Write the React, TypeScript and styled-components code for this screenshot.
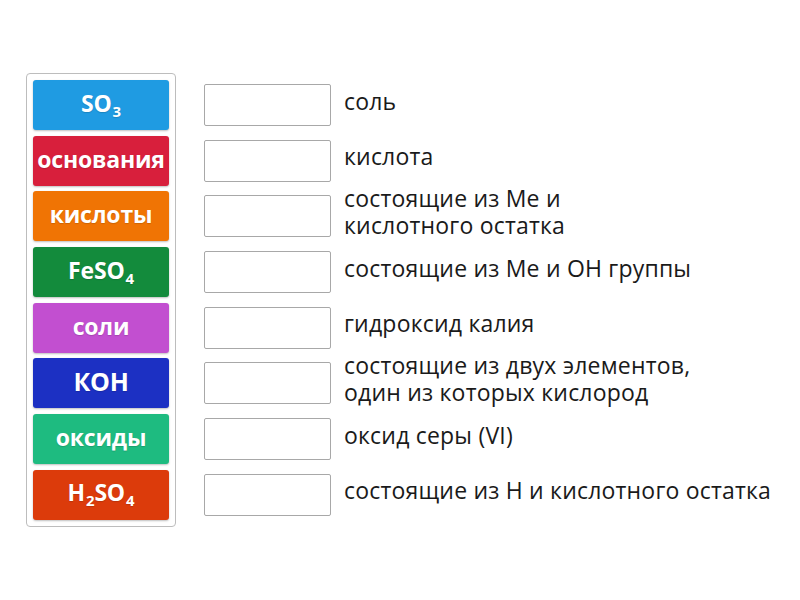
import React from "react";
import styled, { createGlobalStyle } from "styled-components";

const Global = createGlobalStyle`
  html, body { margin: 0; padding: 0; background: #ffffff; }
  body { width: 800px; height: 600px; font-family: "Open Sans", "Liberation Sans", sans-serif; }
`;

const Page = styled.div`
  display: flex;
  align-items: flex-start;
  padding: 73px 0 0 26px;
  gap: 28px;
`;

const Panel = styled.div`
  display: flex;
  flex-direction: column;
  gap: 5.7px;
  padding: 6px;
  width: 136px;
  border: 1px solid #bdbdbd;
  border-radius: 4px;
`;

const Tile = styled.div<{ $bg: string; $size: number }>`
  height: 50px;
  box-sizing: border-box;
  padding-bottom: 4px;
  display: flex;
  align-items: center;
  justify-content: center;
  background: ${(p) => p.$bg};
  border-radius: 3px;
  box-shadow: 0 1px 2px rgba(0, 0, 0, 0.25);
  color: #ffffff;
  font-weight: 700;
  font-size: ${(p) => p.$size}px;
  letter-spacing: -0.2px;
  white-space: nowrap;
  text-shadow: 0 1px 1px rgba(0, 0, 0, 0.15);
`;

const TileText = styled.span`
  line-height: 30px;
`;

const Sub = styled.span`
  font-size: 15px;
  vertical-align: -5px;
  line-height: 1;
  margin-left: 1px;
`;

const Rows = styled.div`
  display: flex;
  flex-direction: column;
  gap: 5.7px;
  padding-top: 7px;
`;

const Row = styled.div`
  height: 50px;
  display: flex;
  align-items: center;
  gap: 13px;
`;

const Slot = styled.div`
  width: 125px;
  height: 40px;
  flex: none;
  border: 1px solid #a8a8a8;
  border-radius: 2px;
  background: #fff;
`;

const Label = styled.div`
  font-size: 23px;
  line-height: 27px;
  letter-spacing: 0.2px;
  margin-top: -8px;
  color: #1a1a1a;
  white-space: pre-line;
`;

const tiles: { bg: string; size: number; content: React.ReactNode }[] = [
  { bg: "#1f9be2", size: 23, content: <>SO<Sub>3</Sub></> },
  { bg: "#d81f3c", size: 23, content: "основания" },
  { bg: "#f07404", size: 23, content: "кислоты" },
  { bg: "#138b3c", size: 23, content: <>FeSO<Sub>4</Sub></> },
  { bg: "#c24fd0", size: 23, content: "соли" },
  { bg: "#1c30c3", size: 25, content: "КОН" },
  { bg: "#1ebb80", size: 23, content: "оксиды" },
  { bg: "#dc3b0b", size: 23, content: <>H<Sub>2</Sub>SO<Sub>4</Sub></> },
];

const labels = [
  "соль",
  "кислота",
  "состоящие из Ме и\nкислотного остатка",
  "состоящие из Ме и ОН группы",
  "гидроксид калия",
  "состоящие из двух элементов,\nодин из которых кислород",
  "оксид серы (VI)",
  "состоящие из Н и кислотного остатка",
];

export default function App() {
  return (
    <>
      <Global />
      <Page>
        <Panel>
          {tiles.map((t, i) => (
            <Tile key={i} $bg={t.bg} $size={t.size}>
              <TileText>{t.content}</TileText>
            </Tile>
          ))}
        </Panel>
        <Rows>
          {labels.map((l, i) => (
            <Row key={i}>
              <Slot />
              <Label>{l}</Label>
            </Row>
          ))}
        </Rows>
      </Page>
    </>
  );
}
